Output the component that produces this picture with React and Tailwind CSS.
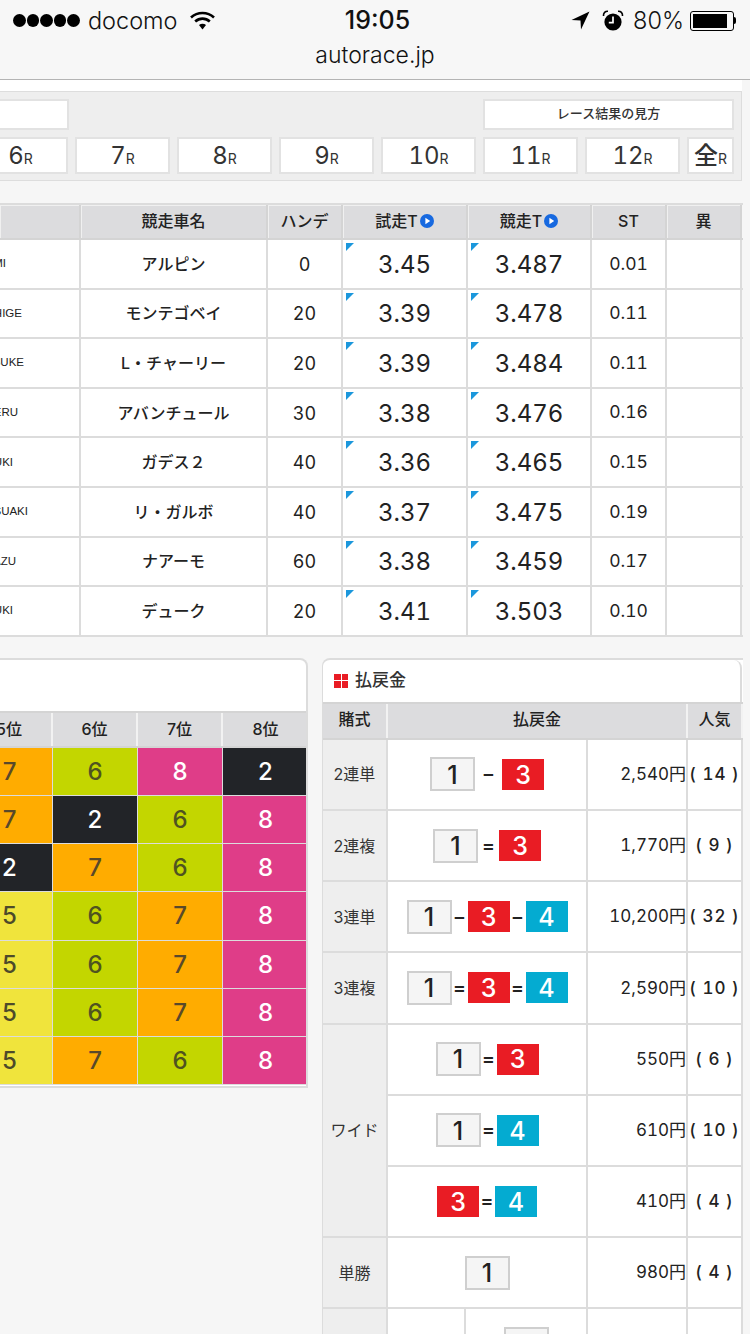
const jp = 'font-["Inter","Noto_Sans_CJK_JP",sans-serif]';

const raceButtons = [
  { n: '6', w: 'w-[95px]', weight: 'font-normal' },
  { n: '7', w: 'w-[95px]', weight: 'font-normal' },
  { n: '8', w: 'w-[95px]', weight: 'font-normal' },
  { n: '9', w: 'w-[95px]', weight: 'font-normal' },
  { n: '10', w: 'w-[95px]', weight: 'font-normal' },
  { n: '11', w: 'w-[95px]', weight: 'font-normal' },
  { n: '12', w: 'w-[95px]', weight: 'font-normal' },
  { n: '全', w: 'w-[47px]', weight: 'font-medium' },
];

// names run off the left edge of the page, only their tail shows
const riders = [
  { name: 'UMI', pad: 'pr-[73px]', car: 'アルピン', hande: '0', shiso: '3.45', kyoso: '3.487', st: '0.01' },
  { name: 'SHIGE', pad: 'pr-[57px]', car: 'モンテゴベイ', hande: '20', shiso: '3.39', kyoso: '3.478', st: '0.11' },
  { name: 'SUKE', pad: 'pr-[55px]', car: 'L・チャーリー', hande: '20', shiso: '3.39', kyoso: '3.484', st: '0.11' },
  { name: 'TERU', pad: 'pr-[61px]', car: 'アバンチュール', hande: '30', shiso: '3.38', kyoso: '3.476', st: '0.16' },
  { name: 'YUKI', pad: 'pr-[66px]', car: 'ガデス２', hande: '40', shiso: '3.36', kyoso: '3.465', st: '0.15' },
  { name: 'TSUAKI', pad: 'pr-[51px]', car: 'リ・ガルボ', hande: '40', shiso: '3.37', kyoso: '3.475', st: '0.19' },
  { name: 'KAZU', pad: 'pr-[63px]', car: 'ナアーモ', hande: '60', shiso: '3.38', kyoso: '3.459', st: '0.17' },
  { name: 'YUKI', pad: 'pr-[66px]', car: 'デューク', hande: '20', shiso: '3.41', kyoso: '3.503', st: '0.10' },
];

const carColors = {
  2: 'bg-[#222428] text-white',
  5: 'bg-[#f0e43c] text-[#4d4a2a]',
  6: 'bg-[#c3d600] text-[#4f5320]',
  7: 'bg-[#ffac00] text-[#59492a]',
  8: 'bg-[#df3d88] text-white',
};

const order = [
  [7, 6, 8, 2],
  [7, 2, 6, 8],
  [2, 7, 6, 8],
  [5, 6, 7, 8],
  [5, 6, 7, 8],
  [5, 6, 7, 8],
  [5, 7, 6, 8],
];

const payouts = [
  { label: '2連単', cars: [1, 3], sign: '−', gap: 'w-[27px]', yen: '2,540円', pop: '( 14 )' },
  { label: '2連複', cars: [1, 3], sign: '=', gap: 'w-[21px]', yen: '1,770円', pop: '( 9 )' },
  { label: '3連単', cars: [1, 3, 4], sign: '−', gap: 'w-[16px]', yen: '10,200円', pop: '( 32 )' },
  { label: '3連複', cars: [1, 3, 4], sign: '=', gap: 'w-[16px]', yen: '2,590円', pop: '( 10 )' },
];

const wide = [
  { cars: [1, 3], yen: '550円', pop: '( 6 )' },
  { cars: [1, 4], yen: '610円', pop: '( 10 )' },
  { cars: [3, 4], yen: '410円', pop: '( 4 )' },
];

function PlayDot() {
  return (
    <svg width="14" height="14" viewBox="0 0 14 14" className="shrink-0">
      <circle cx="7" cy="7" r="7" fill="#1769e0" />
      <path d="M5.4 3.7 L10.2 7 L5.4 10.3 Z" fill="#fff" />
    </svg>
  );
}

function Corner() {
  return (
    <svg width="8" height="8" viewBox="0 0 8 8" className="absolute left-[3px] top-[3px]">
      <path d="M0 0 H8 L0 8 Z" fill="#1b97dc" />
    </svg>
  );
}

function StatusBar() {
  return (
    <div className='grid h-[41px] grid-cols-[1fr_auto_1fr] items-center pl-[13px] pr-[14px] font-["Inter",sans-serif] text-[#111]'>
      <div className="flex items-center">
        <div className="flex gap-[1px]">
          {[0, 1, 2, 3, 4].map(i => <span key={i} className="h-[12.6px] w-[12.6px] rounded-full bg-black" />)}
        </div>
        <span className="ml-[8px] text-[23.5px] font-light leading-none">docomo</span>
        <svg width="25" height="19" viewBox="0 0 25 19" className="ml-[12px]">
          <path d="M1 6.5 C7.5 0.5 17.5 0.5 24 6.5" fill="none" stroke="#000" strokeWidth="2.6" />
          <path d="M5.2 10.5 C9.5 6.6 15.5 6.6 19.8 10.5" fill="none" stroke="#000" strokeWidth="2.6" />
          <path d="M9 14 C11 12.4 14 12.4 16 14 L12.5 18.5 Z" fill="#000" />
        </svg>
      </div>
      <div className="ml-[6px] text-[25px] font-medium leading-none">19:05</div>
      <div className="flex items-center justify-end">
        <svg width="19" height="19" viewBox="0 0 19 19">
          <path d="M18.5 0.5 L0.5 9 L9.5 9.5 L10 18.5 Z" fill="#000" />
        </svg>
        <svg width="22" height="22" viewBox="0 0 22 22" className="ml-[12px]">
          <circle cx="11" cy="12" r="8.6" fill="#000" />
          <path d="M11 6.5 V12.6 H6.8" fill="none" stroke="#fff" strokeWidth="1.7" />
          <path d="M1.5 6 C1.2 3 3.2 1 6 1.2" fill="none" stroke="#000" strokeWidth="1.6" />
          <path d="M20.5 6 C20.8 3 18.8 1 16 1.2" fill="none" stroke="#000" strokeWidth="1.6" />
        </svg>
        <span className="ml-[9px] text-[23.5px] font-light leading-none">80%</span>
        <div className="ml-[6px] flex items-center">
          <div className="h-[20px] w-[44px] rounded-[3px] border border-black p-[2px]">
            <div className="h-full w-[34px] bg-black" />
          </div>
          <div className="h-[7px] w-[2px] rounded-r-full bg-black" />
        </div>
      </div>
    </div>
  );
}

function RaceNav() {
  return (
    <div className="mr-[8px] h-[90px] border-y border-r border-[#ddd] bg-[#eeeeee]">
      <div className="ml-[-27px] mt-[7px] flex h-[31px] justify-between pr-[7px]">
        <div className="w-[96px] border-2 border-[#e2e2e2] bg-white" />
        <div className="flex w-[251px] items-center justify-center border-2 border-[#e2e2e2] bg-white pb-[1px] text-[13px] font-medium text-[#333]">
          レース結果の見方
        </div>
      </div>
      <div className="ml-[-27px] mt-[7px] flex h-[37px] gap-[7px]">
        {raceButtons.map(b => (
          <div key={b.n} className={`${b.w} flex shrink-0 items-baseline justify-center border-2 border-[#e2e2e2] bg-white pt-[3px] text-[#333] tabular-nums`}>
            <span className={`${b.weight} text-[24px] leading-[28px]`}>{b.n}</span>
            <span className="text-[14px] leading-none">R</span>
          </div>
        ))}
      </div>
    </div>
  );
}

const entryCols = 'grid grid-cols-[81px_187px_75px_125px_124px_75px_75px]';

function EntryTable() {
  const th = 'flex items-center justify-center gap-[2px] border-r-2 border-[#d4d4d4] bg-[#dcdcde] pb-[2px] text-[16px] font-medium text-[#222] shadow-[inset_1px_1px_0_#f0f0f0]';
  const td = 'relative flex items-center justify-center border-r-2 border-[#dcdcdc] bg-white text-[#222] tabular-nums';
  return (
    <div className="mt-[22px] w-[743px] border-t-2 border-[#dcdcdc]">
      <div className={`${entryCols} h-[35px] border-b-2 border-[#d4d4d4]`}>
        <div className={th} />
        <div className={th}>競走車名</div>
        <div className={th}>ハンデ</div>
        <div className={th}>試走T<PlayDot /></div>
        <div className={th}>競走T<PlayDot /></div>
        <div className={th}>ST</div>
        <div className={th}>異</div>
      </div>
      {riders.map((r, i) => (
        <div key={i} className={`${entryCols} h-[49.6px] border-b-2 border-[#dcdcdc]`}>
          <div className={`${td} !justify-end overflow-hidden whitespace-nowrap font-["Liberation_Sans",sans-serif] text-[11.5px] ${r.pad}`}>{r.name}</div>
          <div className={`${td} text-[16px] font-medium`}>{r.car}</div>
          <div className={`${td} pt-[1px] text-[18px]`}>{r.hande}</div>
          <div className={`${td} pt-[2px] text-[24px]`}><Corner />{r.shiso}</div>
          <div className={`${td} pt-[2px] text-[24px]`}><Corner />{r.kyoso}</div>
          <div className={`${td} text-[17.5px]`}>{r.st}</div>
          <div className={td} />
        </div>
      ))}
    </div>
  );
}

function OrderPanel() {
  const cols = 'grid grid-cols-[86px_85px_85px_85px]';
  return (
    <div className="h-[430px] w-[308px] shrink-0 overflow-hidden rounded-tr-[8px] border-y-2 border-r-2 border-[#dcdcdc] bg-white">
      <div className="h-[51px]" />
      <div className={`${cols} ml-[-33px] h-[37px] border-y-2 border-[#d4d4d4]`}>
        {['5位', '6位', '7位', '8位'].map(t => (
          <div key={t} className="flex items-center justify-center border-r-2 border-[#f2f2f2] bg-[#dcdcde] text-[16px] font-medium text-[#222] last:border-r-0">{t}</div>
        ))}
      </div>
      {order.map((row, i) => (
        <div key={i} className={`${cols} ml-[-33px] h-[48.2px]`}>
          {row.map((c, j) => (
            <div key={j} className={`${carColors[c]} flex items-center justify-center border-b border-r border-[#dcdcdc] pt-[1px] text-[24px] font-medium last:border-r-0`}>{c}</div>
          ))}
        </div>
      ))}
    </div>
  );
}

function CarBox({ n }) {
  if (n === 1) {
    return <div className="flex h-[34px] w-[45px] shrink-0 items-center justify-center border-2 border-[#cfcfcf] bg-[#f5f5f5] pt-[2px] text-[25px] font-medium text-[#222]">1</div>;
  }
  const color = n === 3 ? 'bg-[#e91c24]' : 'bg-[#04abd1]';
  return <div className={`${color} flex h-[31px] w-[42px] shrink-0 items-center justify-center pt-[2px] text-[25px] font-medium text-white`}>{n}</div>;
}

function Combo({ cars, sign = '=', gap = 'w-[16px]' }) {
  return (
    <div className="flex items-center justify-center">
      {cars.map((c, i) => (
        <div key={i} className="flex items-center">
          {i > 0 && <span className={`${gap} text-center text-[20px] font-medium leading-none text-[#222]`}>{sign}</span>}
          <CarBox n={c} />
        </div>
      ))}
    </div>
  );
}

function PayoutPanel() {
  const cell = 'flex items-center border-b-2 border-r-2 border-[#dcdcdc] bg-white';
  const label = 'flex items-center justify-center border-b-2 border-r-2 border-[#dcdcdc] bg-[#eeeeee] text-[16px] text-[#333]';
  const yen = `${cell} justify-end pt-[1px] text-[17px] text-[#222] tabular-nums`;
  const pop = `${cell} justify-center pt-[1px] text-[17px] font-medium tracking-[1px] text-[#222] tabular-nums`;
  const th = 'flex items-center justify-center border-r-2 border-[#f2f2f2] bg-[#dcdcde] pb-[4px] text-[16px] font-medium text-[#222]';
  const rows = 'grid grid-cols-[65px_200px_100px_55px] auto-rows-[71.2px]';
  return (
    <div className="ml-[14px] w-[421px] shrink-0 overflow-hidden rounded-tl-[8px] border-l border-t-2 border-[#dcdcdc] bg-white">
      <div className="mr-[1px] flex h-[42px] items-center rounded-tr-[8px] border-r-2 border-[#dcdcdc] pl-[11px]">
        <div className="grid h-[14px] w-[14px] grid-cols-2 gap-[1px]">
          {[0, 1, 2, 3].map(i => <span key={i} className="bg-[#e91c24]" />)}
        </div>
        <span className="ml-[7px] text-[17px] font-medium text-[#333]">払戻金</span>
      </div>
      <div className="grid h-[38px] grid-cols-[65px_300px_55px] border-y-2 border-[#d4d4d4]">
        <div className={th}>賭式</div>
        <div className={th}>払戻金</div>
        <div className={`${th} border-r-0`}>人気</div>
      </div>
      <div className={rows}>
        {payouts.map(p => [
          <div key={p.label + 'l'} className={label}>{p.label}</div>,
          <div key={p.label + 'c'} className={`${cell} justify-center`}><Combo cars={p.cars} sign={p.sign} gap={p.gap} /></div>,
          <div key={p.label + 'y'} className={yen}>{p.yen}</div>,
          <div key={p.label + 'p'} className={pop}>{p.pop}</div>,
        ])}
        <div className={`${label} row-span-3`}>ワイド</div>
        {wide.map((w, i) => [
          <div key={i + 'c'} className={`${cell} justify-center`}><Combo cars={w.cars} /></div>,
          <div key={i + 'y'} className={yen}>{w.yen}</div>,
          <div key={i + 'p'} className={pop}>{w.pop}</div>,
        ])}
        <div className={label}>単勝</div>
        <div className={`${cell} justify-center`}><CarBox n={1} /></div>
        <div className={yen}>980円</div>
        <div className={pop}>( 4 )</div>
        <div className={`${label} border-b-0`} />
        <div className="grid grid-cols-[78px_122px]">
          <div className="border-r-2 border-[#dcdcdc] bg-white" />
          <div className="flex justify-center border-r-2 border-[#dcdcdc] bg-white pt-[18px]">
            <div className="h-[34px] w-[45px] border-2 border-[#cfcfcf] bg-[#f5f5f5]" />
          </div>
        </div>
        <div className="border-r-2 border-[#dcdcdc] bg-white" />
        <div className="border-r-2 border-[#dcdcdc] bg-white" />
      </div>
    </div>
  );
}

export default function App() {
  return (
    <div className={`${jp} h-[1334px] w-[750px] overflow-hidden bg-[#f6f6f6]`}>
      <div className="h-[80px] border-b border-[#b4b4b4] bg-[#f7f7f7]">
        <StatusBar />
        <div className="text-center text-[23px] font-light leading-[28px] text-[#111]">autorace.jp</div>
      </div>
      <div className="mr-[8px] h-[11px] bg-white" />
      <RaceNav />
      <EntryTable />
      <div className="mt-[21px] flex">
        <OrderPanel />
        <PayoutPanel />
      </div>
    </div>
  );
}
